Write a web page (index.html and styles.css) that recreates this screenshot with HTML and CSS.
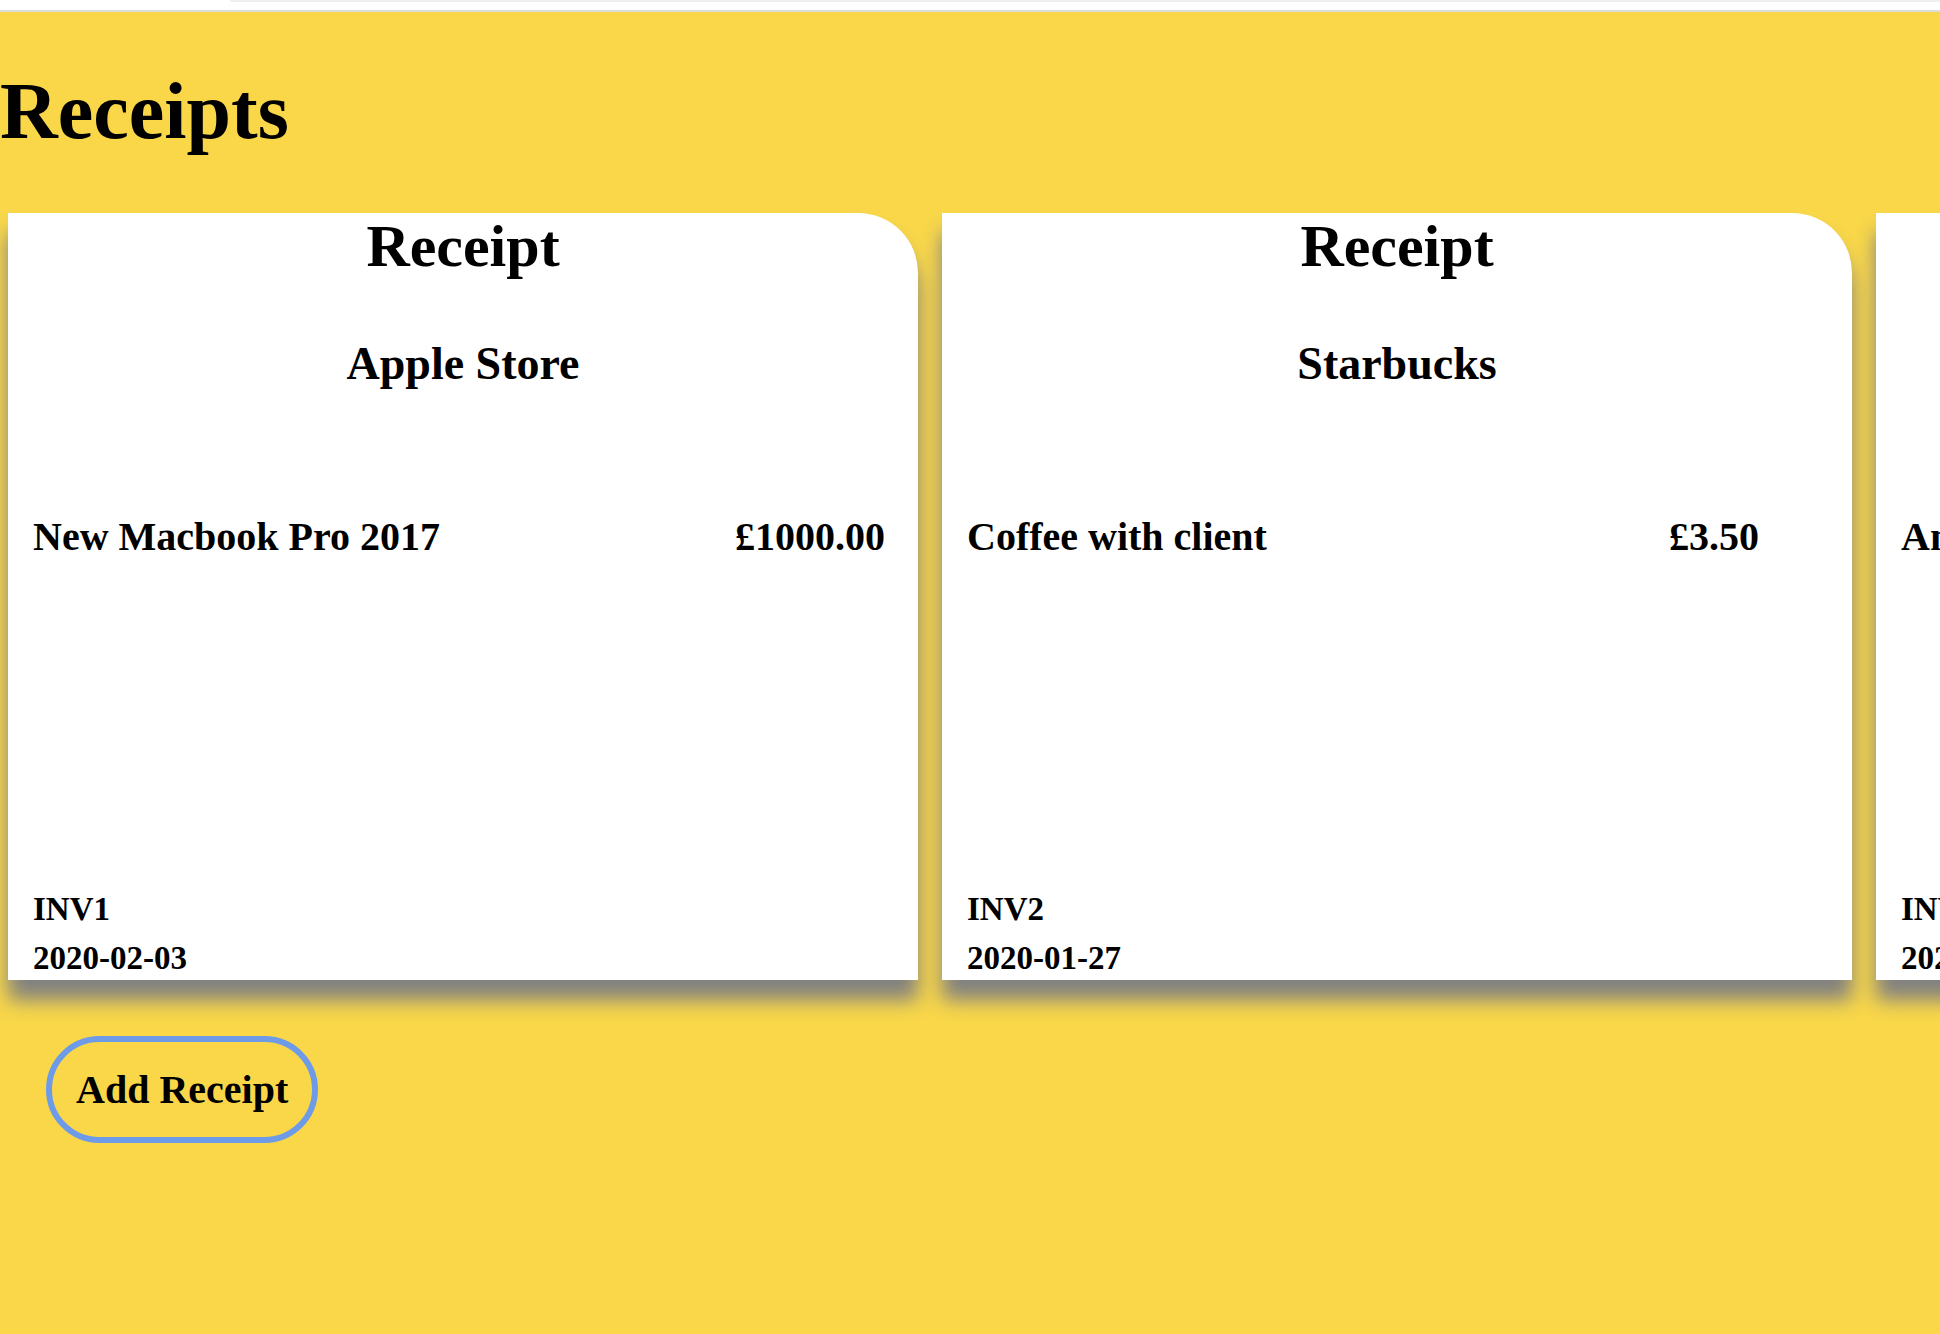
FILE: index.html
```html
<!DOCTYPE html>
<html lang="en">
<head>
<meta charset="utf-8">
<title>Receipts</title>
<link rel="stylesheet" href="styles.css">
</head>
<body>
<div class="topbar"><div class="topbar-tab"></div></div>
<main class="page">
  <h1 class="page-title">Receipts</h1>
  <div class="receipts">
    <article class="receipt">
      <h2 class="receipt-title">Receipt</h2>
      <h3 class="receipt-store">Apple Store</h3>
      <div class="receipt-line">
        <span class="line-desc">New Macbook Pro 2017</span>
        <span class="line-price">£1000.00</span>
      </div>
      <div class="receipt-meta">
        <p class="meta-inv">INV1</p>
        <p class="meta-date">2020-02-03</p>
      </div>
    </article>
    <article class="receipt">
      <h2 class="receipt-title">Receipt</h2>
      <h3 class="receipt-store">Starbucks</h3>
      <div class="receipt-line">
        <span class="line-desc">Coffee with client</span>
        <span class="line-price">£3.50</span>
      </div>
      <div class="receipt-meta">
        <p class="meta-inv">INV2</p>
        <p class="meta-date">2020-01-27</p>
      </div>
    </article>
    <article class="receipt">
      <h2 class="receipt-title">Receipt</h2>
      <h3 class="receipt-store">Amazon</h3>
      <div class="receipt-line">
        <span class="line-desc">Annual subscription</span>
        <span class="line-price">£79.00</span>
      </div>
      <div class="receipt-meta">
        <p class="meta-inv">INV3</p>
        <p class="meta-date">2020-01-15</p>
      </div>
    </article>
  </div>
  <button class="add-btn" type="button">Add Receipt</button>
</main>
</body>
</html>
```
FILE: styles.css
```css
html, body {
  margin: 0;
  padding: 0;
  overflow: hidden;
  height: 100%;
}
body {
  background: #f9d749;
  font-family: "Liberation Serif", "Times New Roman", Times, serif;
  font-weight: bold;
  color: #000;
}
.topbar {
  height: 10px;
  background: #ffffff;
  border-bottom: 2px solid #dcdcdc;
  display: flex;
}
.topbar-tab {
  margin-left: 230px;
  flex: 1;
  height: 2px;
  background: #efefef;
  border-bottom-left-radius: 6px;
}
.page {
  display: flex;
  flex-direction: column;
  align-items: flex-start;
}
.page-title {
  font-size: 80px;
  margin: 0.67em 0;
  line-height: normal;
}
.receipts {
  display: flex;
  gap: 24px;
  padding: 3px 0 0 8px;
}
.receipt {
  flex: 0 0 910px;
  height: 767px;
  box-sizing: border-box;
  padding: 0 25px 2px;
  background: #ffffff;
  border-radius: 0 60px 0 0;
  box-shadow: 0 20px 20px #808080;
  display: flex;
  flex-direction: column;
}
.receipt-title {
  margin: 0;
  font-size: 60px;
  line-height: 66px;
  text-align: center;
}
.receipt-store {
  margin: 57px 0 0;
  font-size: 46px;
  line-height: 1.2;
  text-align: center;
}
.receipt-line {
  margin-top: 122px;
  display: grid;
  grid-template-columns: 702px 1fr;
  font-size: 40px;
  line-height: 48px;
}
.receipt-meta {
  margin-top: auto;
  font-size: 33px;
  line-height: 1.2;
}
.receipt-meta p {
  margin: 0;
}
.meta-date {
  margin-top: 9px !important;
}
.add-btn {
  margin: 56px 0 0 46px;
  font-family: inherit;
  font-weight: bold;
  font-size: 40px;
  line-height: normal;
  color: #000;
  background: transparent;
  border: 6px solid #6d9be8;
  border-radius: 60px;
  padding: 24px;
  cursor: pointer;
}
```
